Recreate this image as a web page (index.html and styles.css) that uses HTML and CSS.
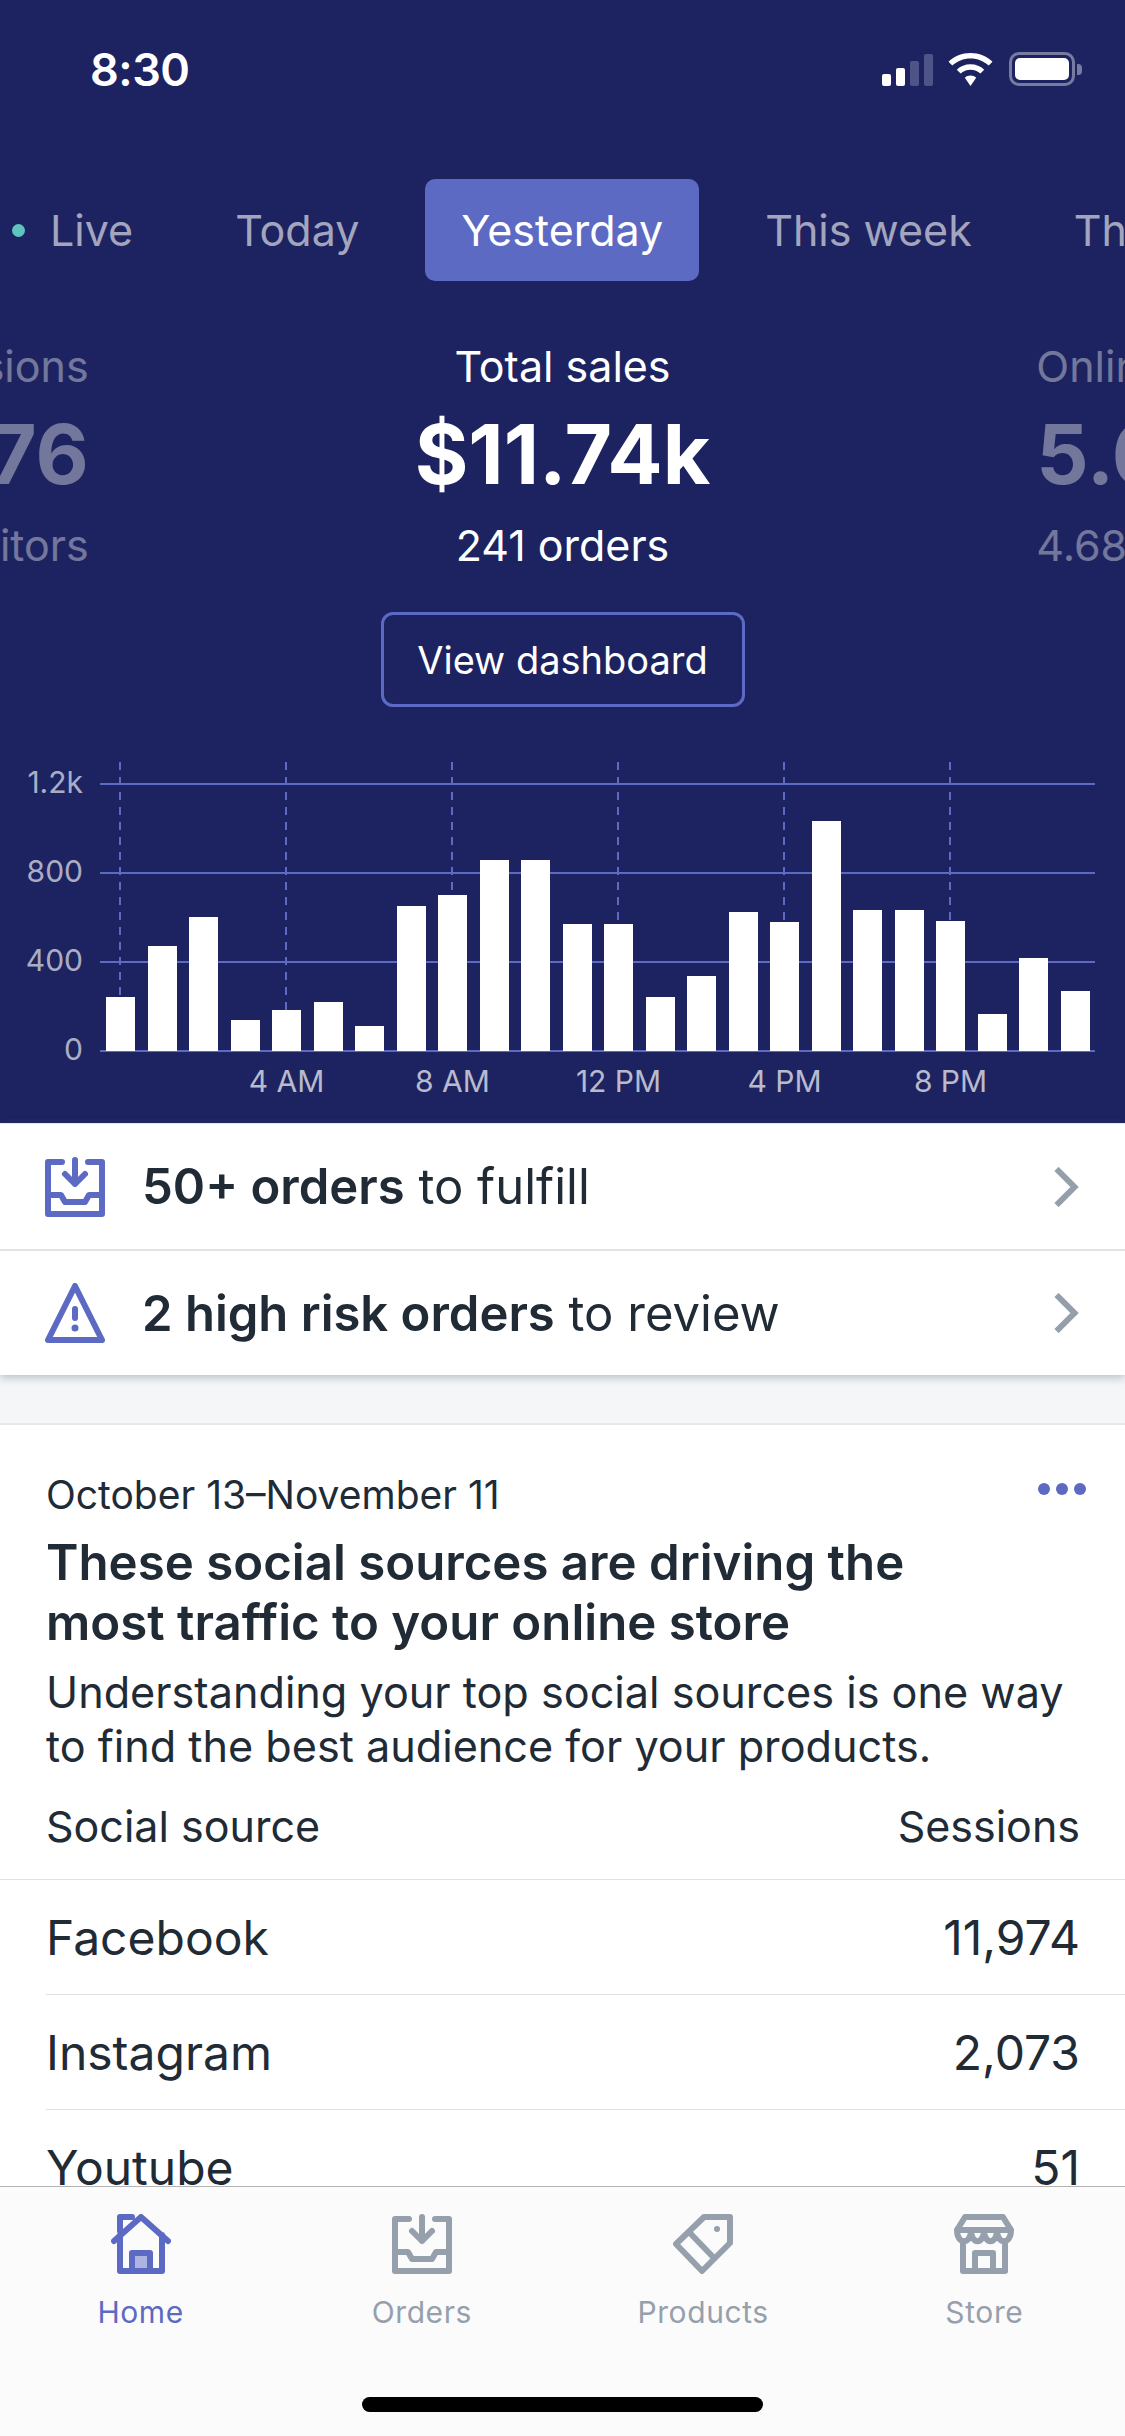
FILE: index.html
```html
<!DOCTYPE html>
<html lang="en">
<head>
    <meta charset="UTF-8">
    <meta name="viewport" content="width=device-width, initial-scale=1.0">
    <title>Home</title>
    <link rel="stylesheet" href="styles.css">
</head>
<body>
    <div class="screen">
        <header class="hero">
            <div class="status-bar">
                <span class="time">8:30</span>
                <div class="status-icons">
                    <div class="signal">
                        <span class="signal-bar s1"></span>
                        <span class="signal-bar s2"></span>
                        <span class="signal-bar s3 off"></span>
                        <span class="signal-bar s4 off"></span>
                    </div>
                    <svg class="wifi" width="45" height="33" viewBox="0 0 45 33">
                        <path d="M22.5 0C14 0 6.300 3.300 0.500 8.700L4.300 12.600C9 8.200 15.400 5.500 22.500 5.500S36 8.200 40.700 12.600L44.500 8.700C38.700 3.300 31 0 22.500 0Z" fill="#fff"/>
                        <path d="M22.500 11.300C17.200 11.300 12.400 13.300 8.800 16.700L12.600 20.600C15.200 18.200 18.700 16.800 22.500 16.800S29.800 18.200 32.400 20.600L36.200 16.700C32.600 13.300 27.800 11.300 22.500 11.300Z" fill="#fff"/>
                        <path d="M22.500 22.500C20.300 22.500 18.300 23.300 16.800 24.700L22.500 33L28.200 24.700C26.700 23.300 24.700 22.500 22.500 22.500Z" fill="#fff"/>
                    </svg>
                    <div class="battery"><span class="battery-fill"></span></div>
                    <span class="battery-nub"></span>
                </div>
            </div>

            <nav class="periods">
                <span class="period live"><i class="live-dot"></i>Live</span>
                <span class="period">Today</span>
                <span class="period active">Yesterday</span>
                <span class="period">This week</span>
                <span class="period">This month</span>
            </nav>

            <div class="stats">
                <div class="stat side left">
                    <p class="stat-label">Sessions</p>
                    <p class="stat-value">8,276</p>
                    <p class="stat-label">visitors</p>
                </div>
                <div class="stat">
                    <p class="stat-label">Total sales</p>
                    <p class="stat-value">$11.74k</p>
                    <p class="stat-label">241 orders</p>
                </div>
                <div class="stat side">
                    <p class="stat-label">Online store</p>
                    <p class="stat-value">5.62%</p>
                    <p class="stat-label">4.68% last week</p>
                </div>
            </div>

            <div class="dashboard-link"><a class="btn-outline">View dashboard</a></div>

            <div class="chart">
                <div class="y-labels">
                    <span>1.2k</span>
                    <span>800</span>
                    <span>400</span>
                    <span>0</span>
                </div>
                <div class="plot">
                    <div class="grid-lines"><i></i><i></i><i></i><i></i></div>
                    <div class="bars">
                        <div class="col tick"><div class="bar" style="height:54px"></div></div>
                        <div class="col"><div class="bar" style="height:105px"></div></div>
                        <div class="col"><div class="bar" style="height:134px"></div></div>
                        <div class="col"><div class="bar" style="height:31px"></div></div>
                        <div class="col tick"><div class="bar" style="height:41px"></div></div>
                        <div class="col"><div class="bar" style="height:49px"></div></div>
                        <div class="col"><div class="bar" style="height:25px"></div></div>
                        <div class="col"><div class="bar" style="height:145px"></div></div>
                        <div class="col tick"><div class="bar" style="height:156px"></div></div>
                        <div class="col"><div class="bar" style="height:191px"></div></div>
                        <div class="col"><div class="bar" style="height:191px"></div></div>
                        <div class="col"><div class="bar" style="height:127px"></div></div>
                        <div class="col tick"><div class="bar" style="height:127px"></div></div>
                        <div class="col"><div class="bar" style="height:54px"></div></div>
                        <div class="col"><div class="bar" style="height:75px"></div></div>
                        <div class="col"><div class="bar" style="height:139px"></div></div>
                        <div class="col tick"><div class="bar" style="height:129px"></div></div>
                        <div class="col"><div class="bar" style="height:230px"></div></div>
                        <div class="col"><div class="bar" style="height:141px"></div></div>
                        <div class="col"><div class="bar" style="height:141px"></div></div>
                        <div class="col tick"><div class="bar" style="height:130px"></div></div>
                        <div class="col"><div class="bar" style="height:37px"></div></div>
                        <div class="col"><div class="bar" style="height:93px"></div></div>
                        <div class="col"><div class="bar" style="height:60px"></div></div>
                    </div>
                </div>
                <div class="x-labels">
                    <span class="x5">4 AM</span>
                    <span class="x9">8 AM</span>
                    <span class="x13">12 PM</span>
                    <span class="x17">4 PM</span>
                    <span class="x21">8 PM</span>
                </div>
            </div>
        </header>

        <section class="tasks">
            <div class="task">
                <svg class="task-icon" width="60" height="60" viewBox="0 0 60 60">
                    <path d="M17 5H3V57H57V5H43M3 38H16L20 45H40L44 38H57M30 3V27M20 17L30 27L40 17"/>
                </svg>
                <p class="task-text"><b>50+ orders</b> to fulfill</p>
                <svg class="chevron" width="26" height="40" viewBox="0 0 26 40">
                    <path d="M2.500 2L20.500 20L2.500 38"/>
                </svg>
            </div>
            <div class="task">
                <svg class="task-icon" width="60" height="60" viewBox="0 0 60 60">
                    <path d="M30 3L57 57H3Z"/>
                    <path d="M30 26V35"/>
                    <circle class="solid" cx="30" cy="45" r="3.500"/>
                </svg>
                <p class="task-text"><b>2 high risk orders</b> to review</p>
                <svg class="chevron" width="26" height="40" viewBox="0 0 26 40">
                    <path d="M2.500 2L20.500 20L2.500 38"/>
                </svg>
            </div>
        </section>

        <section class="card">
            <div class="card-top">
                <span class="card-date">October 13–November 11</span>
                <div class="more"><i></i><i></i><i></i></div>
            </div>
            <h2>These social sources are driving the most traffic to your online store</h2>
            <p class="card-copy">Understanding your top social sources is one way to find the best audience for your products.</p>
            <div class="table-head">
                <span>Social source</span>
                <span>Sessions</span>
            </div>
            <div class="table-row"><span>Facebook</span><span>11,974</span></div>
            <div class="table-row"><span>Instagram</span><span>2,073</span></div>
            <div class="table-row"><span>Youtube</span><span>51</span></div>
        </section>

        <footer class="tab-bar">
            <div class="tabs">
                <div class="tab active">
                    <svg width="60" height="60" viewBox="0 0 60 60">
                        <rect class="door-fill" x="24" y="42" width="12" height="12"/>
                        <path d="M3 27L30 3L57 27M9 21V57H51V21M9 17V3H21M21 57V39H39V57"/>
                    </svg>
                    <span>Home</span>
                </div>
                <div class="tab">
                    <svg width="60" height="60" viewBox="0 0 60 60">
                        <path d="M17 5H3V57H57V5H43M3 38H16L20 45H40L44 38H57M30 3V27M20 17L30 27L40 17"/>
                    </svg>
                    <span>Orders</span>
                </div>
                <div class="tab">
                    <svg width="60" height="60" viewBox="0 0 60 60">
                        <path d="M31 3H57V29L29 57L3 30ZM16 18L41 44"/>
                        <circle class="solid" cx="44" cy="15" r="3"/>
                    </svg>
                    <span>Products</span>
                </div>
                <div class="tab">
                    <svg width="60" height="60" viewBox="0 0 60 60">
                        <path d="M11 3H49L57 16H3ZM3 16C3 31 17 31 17 16C17 31 30 31 30 16C30 31 43 31 43 16C43 31 57 31 57 16M9 27V57H51V27M21 57V39H39V57"/>
                    </svg>
                    <span>Store</span>
                </div>
            </div>
            <div class="home-indicator"></div>
        </footer>
    </div>
</body>
</html>
```

FILE: styles.css
```css
* {
    box-sizing: border-box;
}

body {
    margin: 0;
    font-family: Inter, "Noto Sans", sans-serif;
    color: #212b36;
    background-color: #fff;
}

p, h2 {
    margin: 0;
}

.screen {
    position: relative;
    width: 1125px;
    height: 2436px;
    overflow: hidden;
    background-color: #f4f6f8;
}

/* navy top part */
.hero {
    height: 1123px;
    background-color: #1d2360;
    color: #fff;
}

.status-bar {
    display: flex;
    justify-content: space-between;
    align-items: center;
    height: 138px;
    padding: 0 43px 0 90px;
}

.time {
    font-size: 45px;
    font-weight: 600;
    letter-spacing: -0.5px;
}

.status-icons {
    display: flex;
    align-items: flex-end;
}

.signal {
    display: flex;
    align-items: flex-end;
    gap: 5px;
    margin-right: 15px;
}

.signal-bar {
    width: 9px;
    border-radius: 2px;
    background-color: #fff;
}

.signal-bar.off {
    background-color: #4f5488;
}

.s1 { height: 12px; }
.s2 { height: 18px; }
.s3 { height: 25px; }
.s4 { height: 32px; }

.wifi {
    margin-right: 16px;
}

.battery {
    width: 66px;
    height: 34px;
    padding: 3px;
    border: 3px solid #777ba0;
    border-radius: 10px;
}

.battery-fill {
    display: block;
    height: 100%;
    border-radius: 5px;
    background-color: #fff;
}

.battery-nub {
    width: 5px;
    height: 11px;
    margin: 0 0 11px 2px;
    border-radius: 0 4px 4px 0;
    background-color: #777ba0;
}

.periods {
    display: flex;
    gap: 30px;
    height: 102px;
    margin-top: 41px;
    margin-left: -8px;
    white-space: nowrap;
}

.period {
    display: flex;
    align-items: center;
    padding: 0 36px;
    border-radius: 10px;
    font-size: 43px;
    color: rgba(255,255,255,0.6);
}

.period.live {
    padding-left: 20px;
}

.live-dot {
    width: 13px;
    height: 13px;
    margin-right: 25px;
    border-radius: 50%;
    background-color: #5fc4be;
}

.period.active {
    background-color: #5c6ac4;
    color: #fff;
}

.stats {
    display: grid;
    grid-template-columns: minmax(0, 1fr) auto minmax(0, 1fr);
    column-gap: 326px;
    margin-top: 55px;
    text-align: center;
    white-space: nowrap;
}

.stat-label {
    height: 60px;
    font-size: 43px;
    line-height: 60px;
}

.stat-value {
    height: 80px;
    margin: 19px 0 20px;
    font-size: 82px;
    font-weight: 700;
    line-height: 80px;
}

.stat.side {
    opacity: 0.38;
    text-align: left;
}

.stat.side.left {
    justify-self: end;
    text-align: right;
}

.dashboard-link {
    display: flex;
    justify-content: center;
    margin-top: 37px;
}

.btn-outline {
    display: flex;
    justify-content: center;
    align-items: center;
    width: 364px;
    height: 95px;
    border: 3px solid #5c6ac4;
    border-radius: 12px;
    font-size: 38px;
}

.chart {
    display: grid;
    grid-template-columns: 100px 995px;
    margin-top: 77px;
}

.y-labels {
    display: flex;
    flex-direction: column;
    justify-content: space-between;
    height: 307px;
    margin-top: -22px;
    margin-bottom: -18px;
    padding-right: 17px;
    font-size: 30px;
    line-height: 40px;
    text-align: right;
    color: rgba(255,255,255,0.65);
}

.plot {
    position: relative;
    height: 267px;
}

.grid-lines {
    position: absolute;
    inset: -1px 0 -1px 0;
    display: flex;
    flex-direction: column;
    justify-content: space-between;
}

.grid-lines i {
    display: block;
    height: 2px;
    background-color: #5c6ac4;
}

.bars,
.x-labels {
    display: grid;
    grid-template-columns: repeat(24, 29px);
    column-gap: 12.5px;
    padding-left: 6px;
}

.bars {
    position: relative;
    height: 100%;
}

.col {
    position: relative;
    display: flex;
    align-items: flex-end;
}

.col.tick::before {
    content: "";
    position: absolute;
    top: -22px;
    bottom: 0;
    left: 13px;
    width: 2px;
    background-image: repeating-linear-gradient(to bottom, #5c6ac4 0, #5c6ac4 8px, transparent 8px, transparent 15px);
}

.bar {
    position: relative;
    width: 100%;
    background-color: #fff;
}

.x-labels {
    grid-column: 2;
    margin-top: 10px;
    font-size: 30px;
    line-height: 40px;
    color: rgba(255,255,255,0.7);
}

.x-labels span {
    justify-self: center;
    white-space: nowrap;
}

.x5 { grid-column: 5; }
.x9 { grid-column: 9; }
.x13 { grid-column: 13; }
.x17 { grid-column: 17; }
.x21 { grid-column: 21; }

/* order tasks */
.tasks {
    position: relative;
    border-top: 1px solid #e6e8ee;
    box-shadow: 0 3px 8px rgba(99,115,129,0.4);
}

.task {
    display: flex;
    align-items: center;
    height: 125px;
    padding: 0 45px;
    background-color: #fff;
}

.task + .task {
    height: 126px;
    border-top: 2px solid #dfe3e8;
}

.task-icon path {
    fill: none;
    stroke: #5c6ac4;
    stroke-width: 6;
    stroke-linecap: round;
    stroke-linejoin: round;
}

.task-icon .solid {
    fill: #5c6ac4;
}

.task-text {
    flex: 1;
    margin-left: 37px;
    font-size: 49px;
}

.task-text b {
    font-weight: 600;
}

.chevron path {
    fill: none;
    stroke: #959fab;
    stroke-width: 6;
}

/* insight card */
.card {
    margin-top: 48px;
    padding-top: 40px;
    border-top: 2px solid #e6e8ea;
    background-color: #fff;
}

.card-top {
    display: flex;
    justify-content: space-between;
    height: 62px;
    padding: 0 39px 0 46px;
}

.card-date {
    font-size: 39px;
    line-height: 60px;
}

.more {
    display: flex;
    gap: 6px;
    margin-top: 18px;
}

.more i {
    width: 12px;
    height: 12px;
    border-radius: 50%;
    background-color: #5c6ac4;
}

h2 {
    width: 1000px;
    padding-left: 46px;
    font-size: 49.2px;
    font-weight: 600;
    line-height: 60px;
    margin-top: 5px;
}

.card-copy {
    width: 1080px;
    padding-left: 46px;
    margin-top: 13px;
    font-size: 43.2px;
    line-height: 54px;
}

.table-head {
    display: flex;
    justify-content: space-between;
    align-items: center;
    height: 107px;
    padding: 0 45px 0 46px;
    border-bottom: 1px solid #dfe3e8;
    font-size: 43px;
}

.table-row {
    display: flex;
    justify-content: space-between;
    align-items: center;
    height: 115px;
    margin-left: 46px;
    padding-right: 45px;
    border-bottom: 1px solid #dfe3e8;
    font-size: 48px;
}

/* bottom bar sits over the scrolled card */
.tab-bar {
    position: absolute;
    left: 0;
    right: 0;
    bottom: 0;
    height: 250px;
    border-top: 1px solid #b4b4b4;
    background-color: #fbfbfb;
}

.tabs {
    display: grid;
    grid-template-columns: repeat(4, 1fr);
    padding-top: 27px;
}

.tab {
    display: flex;
    flex-direction: column;
    align-items: center;
    gap: 20px;
    font-size: 30px;
    line-height: 36px;
    letter-spacing: 0.6px;
    color: #95a0ac;
}

.tab svg path {
    fill: none;
    stroke: #95a0ac;
    stroke-width: 6;
    stroke-linecap: round;
    stroke-linejoin: round;
}

.tab .solid {
    fill: #95a0ac;
}

.tab.active {
    color: #5c6ac4;
}

.tab.active svg path {
    stroke: #5c6ac4;
}

.door-fill {
    fill: #adb4e1;
}

.home-indicator {
    position: absolute;
    left: 362px;
    bottom: 24px;
    width: 401px;
    height: 15px;
    border-radius: 8px;
    background-color: #000;
}
```
